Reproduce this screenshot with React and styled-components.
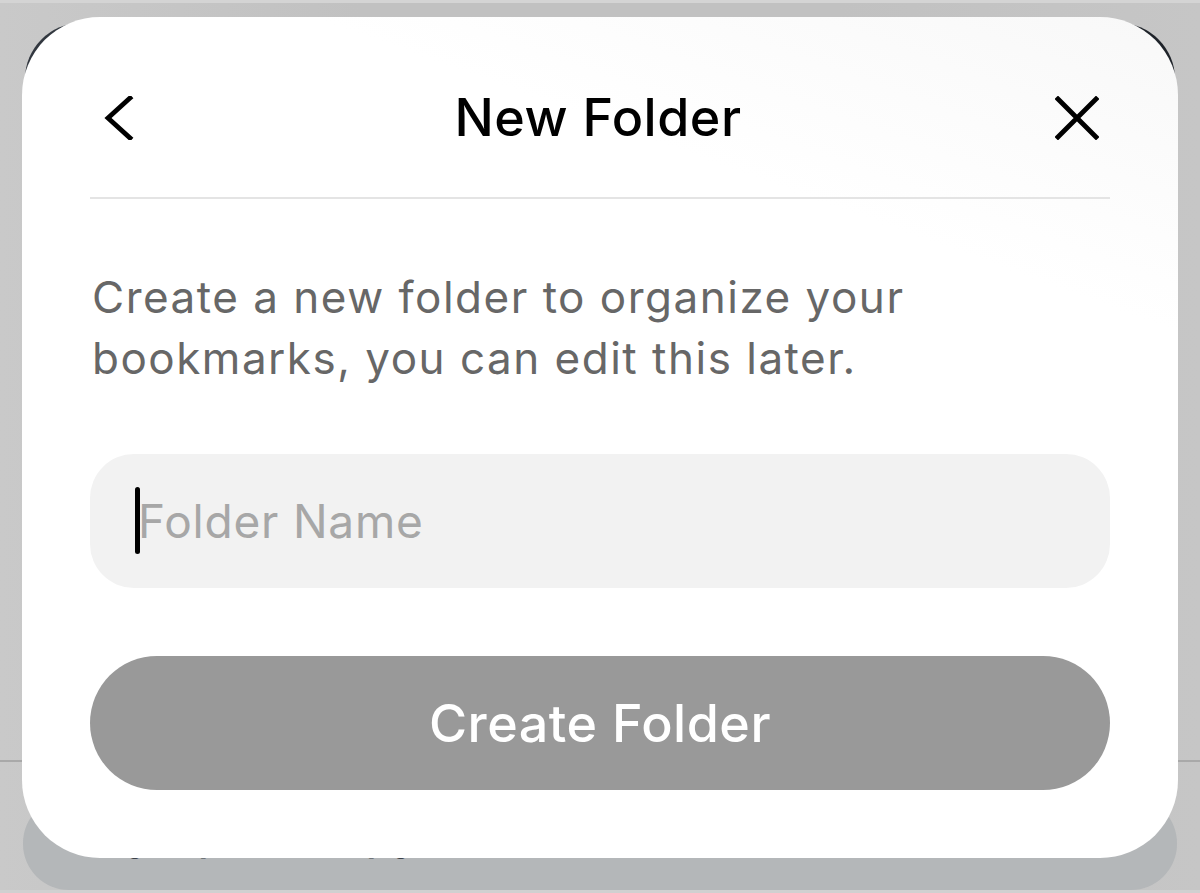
import React from "react";
import styled, { createGlobalStyle } from "styled-components";

const GlobalStyle = createGlobalStyle`
  html, body {
    margin: 0;
    padding: 0;
    background: #c3c3c3;
  }
  * {
    box-sizing: border-box;
  }
`;

const FONT = `Inter, "Noto Sans", "Liberation Sans", sans-serif`;

function App() {
  return (
    <Page>
      <GlobalStyle />
      <Scene>
        <TopEdge />
        <DarkCard />
        <Separator />
        <FooterCard>
          <FooterText>Tidy up its copy</FooterText>
        </FooterCard>
        <BottomEdge />
      </Scene>

      <Sheet role="dialog" aria-label="New Folder">
        <Header>
          <IconButton aria-label="Back">
            <svg width="44" height="44" viewBox="0 0 44 44" fill="none">
              <path
                d="M33 2 L11 22 L33 42"
                stroke="#000"
                strokeWidth="4.8"
                strokeLinecap="square"
                strokeLinejoin="miter"
              />
            </svg>
          </IconButton>
          <Title>New Folder</Title>
          <IconButton aria-label="Close" $end>
            <svg width="44" height="44" viewBox="0 0 44 44" fill="none">
              <path
                d="M3 3 L41 41 M41 3 L3 41"
                stroke="#000"
                strokeWidth="4.8"
                strokeLinecap="square"
              />
            </svg>
          </IconButton>
        </Header>
        <Divider />
        <Body>
          <Description>
            Create a new folder to organize your
            <br />
            bookmarks, you can edit this later.
          </Description>
          <Field>
            <Caret />
            <NameInput placeholder="Folder Name" />
          </Field>
          <CreateButton disabled>Create Folder</CreateButton>
        </Body>
      </Sheet>
    </Page>
  );
}

export default App;

const Page = styled.div`
  position: relative;
  width: 1200px;
  height: 893px;
  overflow: hidden;
  background: linear-gradient(90deg, #c9c9c9 0%, #c1c1c1 30%, #c1c1c1 70%, #c6c6c6 100%);
  font-family: ${FONT};
`;

const Scene = styled.div`
  display: flex;
  flex-direction: column;
  height: 100%;
`;

const TopEdge = styled.div`
  height: 3px;
  background: #d4d4d4;
`;

const DarkCard = styled.div`
  margin: 20px 25px 0;
  height: 700px;
  border-radius: 56px;
  background: radial-gradient(circle at 20% 10%, #3a4048 0%, #22272e 60%, #1c2026 100%);
`;

const Separator = styled.div`
  margin-top: 37px;
  height: 2px;
  background: #a9a9a9;
`;

const FooterCard = styled.div`
  margin: 35px 23px 0;
  flex: 1;
  border-radius: 46px;
  background: #b4b7b9;
  padding: 12px 0 0 32px;
  overflow: hidden;
`;

const FooterText = styled.div`
  font-size: 44px;
  line-height: 50px;
  color: #3b4048;
  font-weight: 500;
  letter-spacing: 2px;
`;

const BottomEdge = styled.div`
  height: 3px;
  background: #d0d0d0;
`;

const Sheet = styled.div`
  position: absolute;
  top: 17px;
  left: 22px;
  width: 1156px;
  height: 841px;
  border-radius: 78px;
  background: linear-gradient(200deg, #f8f8f8 0%, #ffffff 25%, #ffffff 100%);
  display: flex;
  flex-direction: column;
`;

const Header = styled.div`
  display: grid;
  grid-template-columns: 1fr auto 1fr;
  align-items: center;
  align-content: start;
  padding: 79px 79px 0 75px;
  height: 180px;
`;

const IconButton = styled.button`
  width: 44px;
  height: 44px;
  padding: 0;
  border: none;
  background: none;
  display: flex;
  justify-self: ${(p) => (p.$end ? "end" : "start")};
`;

const Title = styled.h1`
  margin: 0;
  font-size: 52px;
  font-weight: 500;
  color: #000;
  letter-spacing: 0.5px;
  line-height: 44px;
`;

const Divider = styled.div`
  margin: 0 68px;
  height: 2px;
  background: #e4e4e4;
`;

const Body = styled.div`
  display: flex;
  flex-direction: column;
  padding: 0 68px;
`;

const Description = styled.p`
  margin: 68px 0 0 2px;
  font-size: 44px;
  line-height: 61px;
  color: #676767;
  font-weight: 400;
  letter-spacing: 1.5px;
`;

const Field = styled.label`
  position: relative;
  margin-top: 65px;
  height: 134px;
  border-radius: 44px;
  background: #f2f2f2;
  display: flex;
  align-items: center;
  padding-left: 46px;
`;

const Caret = styled.span`
  position: absolute;
  left: 45px;
  top: 33px;
  width: 5px;
  height: 67px;
  border-radius: 3px;
  background: #000;
`;

const NameInput = styled.input`
  flex: 1;
  border: none;
  background: transparent;
  outline: none;
  font-family: ${FONT};
  font-size: 46px;
  color: #000;
  padding: 0 0 0 2px;
  letter-spacing: 0.8px;

  &::placeholder {
    color: #a7a7a7;
  }
`;

const CreateButton = styled.button`
  margin-top: 68px;
  height: 134px;
  border: none;
  border-radius: 67px;
  background: #999999;
  color: #fff;
  font-family: ${FONT};
  font-size: 52px;
  font-weight: 500;
  letter-spacing: 0.5px;
  cursor: default;
`;
